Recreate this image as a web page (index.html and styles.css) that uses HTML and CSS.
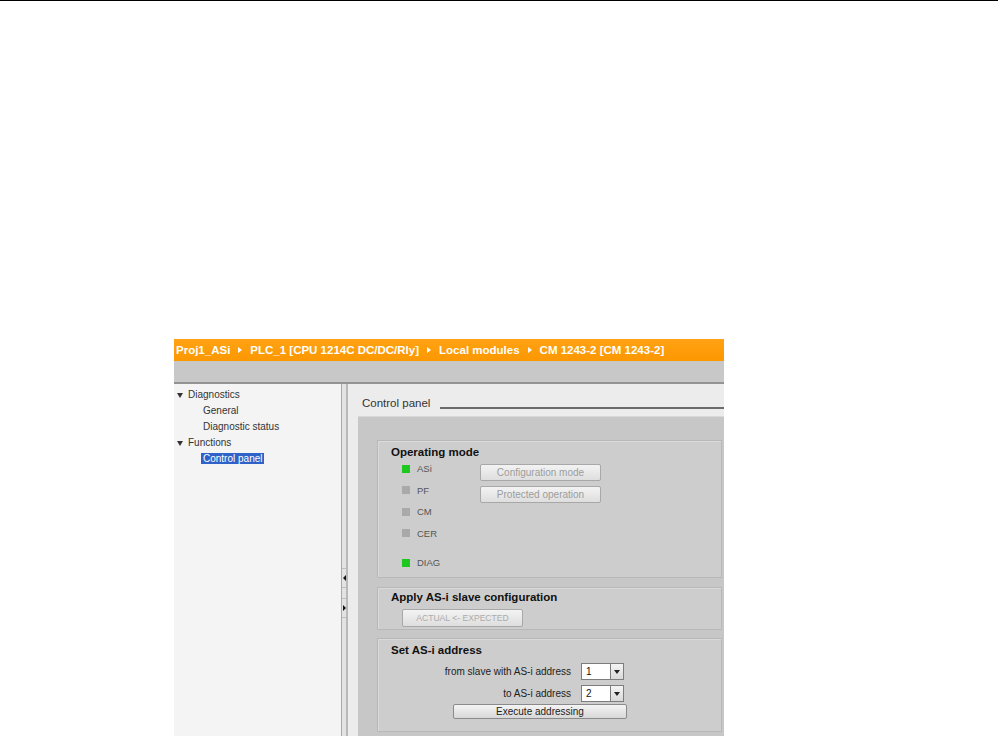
FILE: index.html
```html
<!DOCTYPE html>
<html lang="en">

<head>
    <meta charset="UTF-8">
    <meta name="viewport" content="width=device-width, initial-scale=1.0">
    <title>CM 1243-2 Control panel</title>
    <link rel="stylesheet" href="styles.css">
</head>

<body>
    <div class="page-rule"></div>

    <div class="figure">
        <div class="crumbs">
            <span>Proj1_ASi</span><span class="sep"></span>
            <span>PLC_1 [CPU 1214C DC/DC/Rly]</span><span class="sep"></span>
            <span>Local modules</span><span class="sep"></span>
            <span>CM 1243-2 [CM 1243-2]</span>
        </div>
        <div class="toolbar"></div>

        <div class="main">
            <ul class="tree">
                <li class="node">Diagnostics</li>
                <li class="leaf">General</li>
                <li class="leaf">Diagnostic status</li>
                <li class="node">Functions</li>
                <li class="leaf"><span class="selected">Control panel</span></li>
            </ul>

            <div class="splitter">
                <div class="handle"><span class="arrow-left"></span></div>
                <div class="handle"><span class="arrow-right"></span></div>
            </div>

            <div class="content">
                <div class="heading">
                    <span>Control panel</span>
                    <span class="rule"></span>
                </div>

                <div class="panel">
                    <div class="group mode">
                        <h2>Operating mode</h2>
                        <div class="mode-body">
                            <ul class="leds">
                                <li><span class="led on"></span>ASi</li>
                                <li><span class="led"></span>PF</li>
                                <li><span class="led"></span>CM</li>
                                <li><span class="led"></span>CER</li>
                                <li class="diag"><span class="led on"></span>DIAG</li>
                            </ul>
                            <div class="mode-buttons">
                                <button class="btn" disabled>Configuration mode</button>
                                <button class="btn" disabled>Protected operation</button>
                            </div>
                        </div>
                    </div>

                    <div class="group apply">
                        <h2>Apply AS-i slave configuration</h2>
                        <button class="btn btn-apply" disabled>ACTUAL &lt;- EXPECTED</button>
                    </div>

                    <div class="group address">
                        <h2>Set AS-i address</h2>
                        <div class="addr-row">
                            <label>from slave with AS-i address</label>
                            <div class="combo">
                                <span class="combo-value">1</span>
                                <span class="combo-arrow"><span class="arrow-down"></span></span>
                            </div>
                        </div>
                        <div class="addr-row">
                            <label>to AS-i address</label>
                            <div class="combo">
                                <span class="combo-value">2</span>
                                <span class="combo-arrow"><span class="arrow-down"></span></span>
                            </div>
                        </div>
                        <button class="btn btn-execute">Execute addressing</button>
                    </div>
                </div>
            </div>
        </div>
    </div>
</body>

</html>
```

FILE: styles.css
```css
* {
    margin: 0;
    padding: 0;
    box-sizing: border-box;
}

html,
body {
    height: 100%;
    overflow: hidden;
}

body {
    background: #fff;
    font-family: "Liberation Sans", Arial, sans-serif;
}

.page-rule {
    height: 1px;
    background: #000;
}

.figure {
    width: 550px;
    margin: 338px 0 0 174px;
}

/* orange breadcrumb bar */
.crumbs {
    height: 22px;
    display: flex;
    align-items: center;
    padding-left: 2px;
    background: linear-gradient(#ffa214, #fc9700);
    color: #fff;
    font-size: 11.5px;
    font-weight: bold;
    white-space: nowrap;
    overflow: hidden;
}

.sep {
    width: 0;
    height: 0;
    margin: 0 8px;
    border-top: 3px solid transparent;
    border-bottom: 3px solid transparent;
    border-left: 4px solid #fff;
}

.toolbar {
    height: 23px;
    background: #c8c8c8;
    border-bottom: 2px solid #939393;
}

.main {
    display: flex;
    height: 352px;
}

/* navigation tree */
.tree {
    width: 167px;
    padding-top: 3px;
    background: #f4f4f4;
    list-style: none;
    font-size: 10px;
    color: #333;
}

.tree li {
    height: 16px;
    line-height: 16px;
    white-space: nowrap;
}

.node {
    display: flex;
    align-items: center;
}

.node::before {
    content: "";
    margin: 0 5px 0 3px;
    border-left: 3.5px solid transparent;
    border-right: 3.5px solid transparent;
    border-top: 5px solid #333;
}

.leaf {
    padding-left: 29px;
}

.selected {
    display: inline-block;
    line-height: 11px;
    margin-left: -2px;
    padding: 0 2px;
    background: #2f62c8;
    color: #fff;
}

.splitter {
    width: 7px;
    padding-top: 184px;
    background: #e3e3e3;
    border-left: 1px solid #a9a9a9;
    border-right: 2px solid #b9b9b9;
}

.handle {
    height: 20px;
    margin-bottom: 10px;
    display: flex;
    align-items: center;
    justify-content: center;
    border-top: 1px solid #c0c0c0;
    border-bottom: 1px solid #c0c0c0;
}

.arrow-left,
.arrow-right {
    width: 0;
    height: 0;
    border-top: 3px solid transparent;
    border-bottom: 3px solid transparent;
}

.arrow-left {
    border-right: 3px solid #111;
}

.arrow-right {
    border-left: 3px solid #111;
}

/* editor area */
.content {
    flex: 1;
    display: flex;
    flex-direction: column;
    background: #ececec;
}

.heading {
    height: 32px;
    display: flex;
    padding: 12px 0 0 14px;
    font-size: 11.5px;
    line-height: 14px;
    color: #333;
}

.rule {
    flex: 1;
    height: 0;
    margin: 11px 0 0 10px;
    border-top: 2px solid #6b6b6b;
}

.panel {
    flex: 1;
    display: flex;
    flex-direction: column;
    margin-left: 10px;
    padding: 23px 2px 0 19px;
    background: #c7c7c7;
    border-top: 1px solid #d8d8d8;
}

.group {
    padding-left: 13px;
    background: #cdcdcd;
    border: 1px solid #b8b8b8;
    box-shadow: inset 1px 1px 0 #dadada;
}

.group h2 {
    font-size: 11.5px;
    font-weight: bold;
    line-height: 12px;
    color: #111;
}

.mode {
    height: 138px;
    padding-top: 5px;
    margin-bottom: 9px;
}

.mode-body {
    display: flex;
    padding-left: 11px;
}

.leds {
    width: 78px;
    list-style: none;
}

.leds li {
    height: 21.5px;
    display: flex;
    align-items: center;
    font-size: 9.5px;
    color: #555;
}

.leds li.diag {
    margin-top: 8px;
}

.led {
    width: 8px;
    height: 8px;
    margin-right: 7px;
    background: #a9a9a9;
}

.led.on {
    background: #1fc81f;
}

.mode-buttons {
    display: flex;
    flex-direction: column;
    gap: 5px;
    margin-top: 6px;
}

.btn {
    width: 121px;
    height: 17px;
    font-family: "Liberation Sans", Arial, sans-serif;
    font-size: 10px;
    color: #9c9c9c;
    background: linear-gradient(#f3f3f3, #dedede);
    border: 1px solid #a8a8a8;
    border-radius: 2px;
}

.apply {
    height: 43px;
    padding-top: 3px;
    margin-bottom: 8px;
}

.btn-apply {
    display: block;
    height: 18px;
    margin: 6px 0 0 11px;
    font-size: 8.6px;
    color: #ababab;
}

.address {
    height: 94px;
    padding-top: 5px;
}

.addr-row {
    display: flex;
    align-items: center;
    margin-top: 7px;
    height: 17px;
}

.addr-row + .addr-row {
    margin-top: 5px;
}

.addr-row label {
    width: 180px;
    margin-right: 10px;
    text-align: right;
    font-size: 10px;
    color: #222;
}

.combo {
    display: flex;
    height: 17px;
}

.combo-value {
    width: 30px;
    padding-left: 4px;
    line-height: 15px;
    font-size: 10px;
    color: #111;
    background: #fff;
    border: 1px solid #7d7d7d;
}

.combo-arrow {
    width: 13px;
    display: flex;
    align-items: center;
    justify-content: center;
    background: linear-gradient(#f4f4f4, #d9d9d9);
    border: 1px solid #7d7d7d;
    border-left: none;
}

.arrow-down {
    width: 0;
    height: 0;
    border-left: 3px solid transparent;
    border-right: 3px solid transparent;
    border-top: 4px solid #222;
}

.btn-execute {
    display: block;
    width: 174px;
    height: 15px;
    margin: 2px 0 0 62px;
    color: #222;
    background: linear-gradient(#f4f4f4, #d8d8d8);
    border-color: #8a8a8a;
}
```
